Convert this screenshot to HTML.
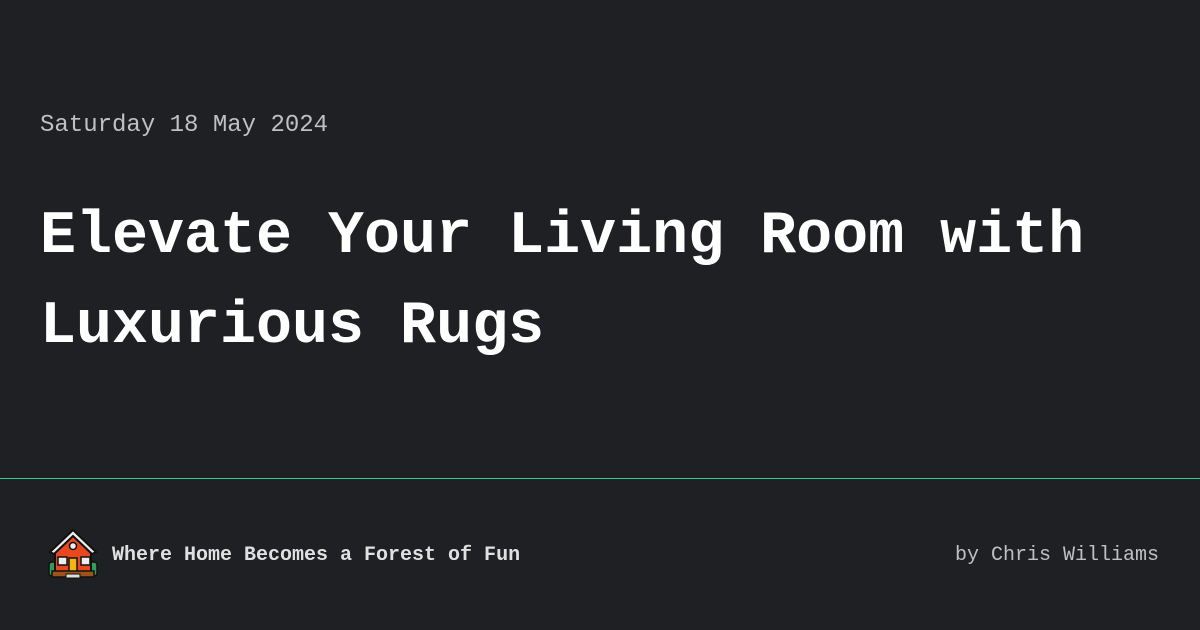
<!DOCTYPE html>
<html><head><meta charset="utf-8"><style>
*{margin:0;padding:0;box-sizing:border-box}
body{width:1200px;height:630px;background:#1f2023;font-family:"Liberation Mono",monospace;position:relative;overflow:hidden}
.date{position:absolute;left:40px;top:110px;font-size:24px;line-height:32px;color:#c0c0c0}
h1{position:absolute;left:40px;top:192px;font-size:60px;line-height:90px;color:#fff;font-weight:bold;width:1140px}
.line{position:absolute;left:0;top:478px;width:1200px;height:1px;background:#2fcf8c}
.tag{position:absolute;left:112px;top:543px;font-size:20px;line-height:26px;color:#e0e0e0;font-weight:bold}
.by{position:absolute;right:41px;top:543px;font-size:20px;line-height:26px;color:#c0c0c0}
svg{position:absolute;left:47px;top:528px}
</style></head><body>
<div class="date">Saturday 18 May 2024</div>
<h1>Elevate Your Living Room with Luxurious Rugs</h1>
<div class="line"></div>
<svg width="52" height="52" viewBox="0 0 52 52">
<rect x="2" y="34" width="8" height="14" rx="3" fill="#2e9e5a" stroke="#111" stroke-width="1.5"/>
<rect x="42" y="34" width="8" height="14" rx="3" fill="#2e9e5a" stroke="#111" stroke-width="1.5"/>
<path d="M8 22 L26 6 L44 22 L44 46 L8 46 Z" fill="#e8481f" stroke="#111" stroke-width="2"/>
<path d="M3 24 L26 2 L49 24 L45 26 L26 8 L7 26 Z" fill="#eee" stroke="#111" stroke-width="2"/>
<circle cx="26" cy="18" r="3.5" fill="#eee" stroke="#111" stroke-width="1.5"/>
<rect x="11" y="29" width="9" height="8" fill="#eee" stroke="#111" stroke-width="1.5"/>
<rect x="34" y="29" width="9" height="8" fill="#eee" stroke="#111" stroke-width="1.5"/>
<rect x="22" y="30" width="8" height="16" fill="#f5b40f" stroke="#111" stroke-width="1.5"/>
<rect x="5" y="43" width="42" height="6" fill="#a0521d" stroke="#111" stroke-width="1.5"/>
<rect x="19" y="46" width="14" height="4" fill="#ddd" stroke="#111" stroke-width="1"/>
</svg>
<div class="tag">Where Home Becomes a Forest of Fun</div>
<div class="by">by Chris Williams</div>
</body></html>
